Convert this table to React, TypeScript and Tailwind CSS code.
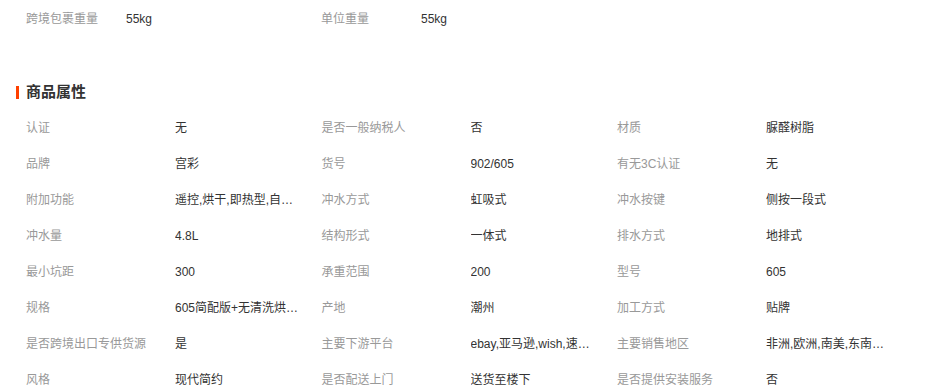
const font = "font-['Liberation_Sans','Noto_Sans_CJK_SC',sans-serif]"

const attrs: [string, string][] = [
  ['认证', '无'],
  ['是否一般纳税人', '否'],
  ['材质', '脲醛树脂'],
  ['品牌', '宫彩'],
  ['货号', '902/605'],
  ['有无3C认证', '无'],
  ['附加功能', '遥控,烘干,即热型,自动冲水,座圈加热'],
  ['冲水方式', '虹吸式'],
  ['冲水按键', '侧按一段式'],
  ['冲水量', '4.8L'],
  ['结构形式', '一体式'],
  ['排水方式', '地排式'],
  ['最小坑距', '300'],
  ['承重范围', '200'],
  ['型号', '605'],
  ['规格', '605简配版+无清洗烘干功能'],
  ['产地', '潮州'],
  ['加工方式', '贴牌'],
  ['是否跨境出口专供货源', '是'],
  ['主要下游平台', 'ebay,亚马逊,wish,速卖通,独立站'],
  ['主要销售地区', '非洲,欧洲,南美,东南亚,北美'],
  ['风格', '现代简约'],
  ['是否配送上门', '送货至楼下'],
  ['是否提供安装服务', '否'],
]

export default function App() {
  const rows: [string, string][][] = []
  for (let i = 0; i < attrs.length; i += 3) rows.push(attrs.slice(i, i + 3))

  return (
    <div className={`w-[938px] h-[390px] overflow-hidden bg-white text-xs ${font}`}>
      <div className="flex items-center h-[38px] pl-[26px]">
        <span className="w-[100px] text-[#999]">跨境包裹重量</span>
        <span className="w-[195px] text-[#333]">55kg</span>
        <span className="w-[100px] text-[#999]">单位重量</span>
        <span className="text-[#333]">55kg</span>
      </div>

      <div className="flex items-center h-5 mt-[44px] pl-4">
        <span className="w-[3px] h-[13px] bg-[#ff4000] mr-[7px]" />
        <h3 className="text-[15px] font-bold text-[#333]">商品属性</h3>
      </div>

      <div className="mt-2 pl-[26px]">
        {rows.map((row, i) => (
          <div key={i} className="flex items-center h-9">
            {row.map(([label, value]) => (
              <div key={label} className="flex items-center">
                <span className="w-[149px] text-[#999] whitespace-nowrap">{label}</span>
                <span className="w-[146.5px]">
                  <span className="block max-w-[124px] truncate text-[#333]">{value}</span>
                </span>
              </div>
            ))}
          </div>
        ))}
      </div>
    </div>
  )
}
